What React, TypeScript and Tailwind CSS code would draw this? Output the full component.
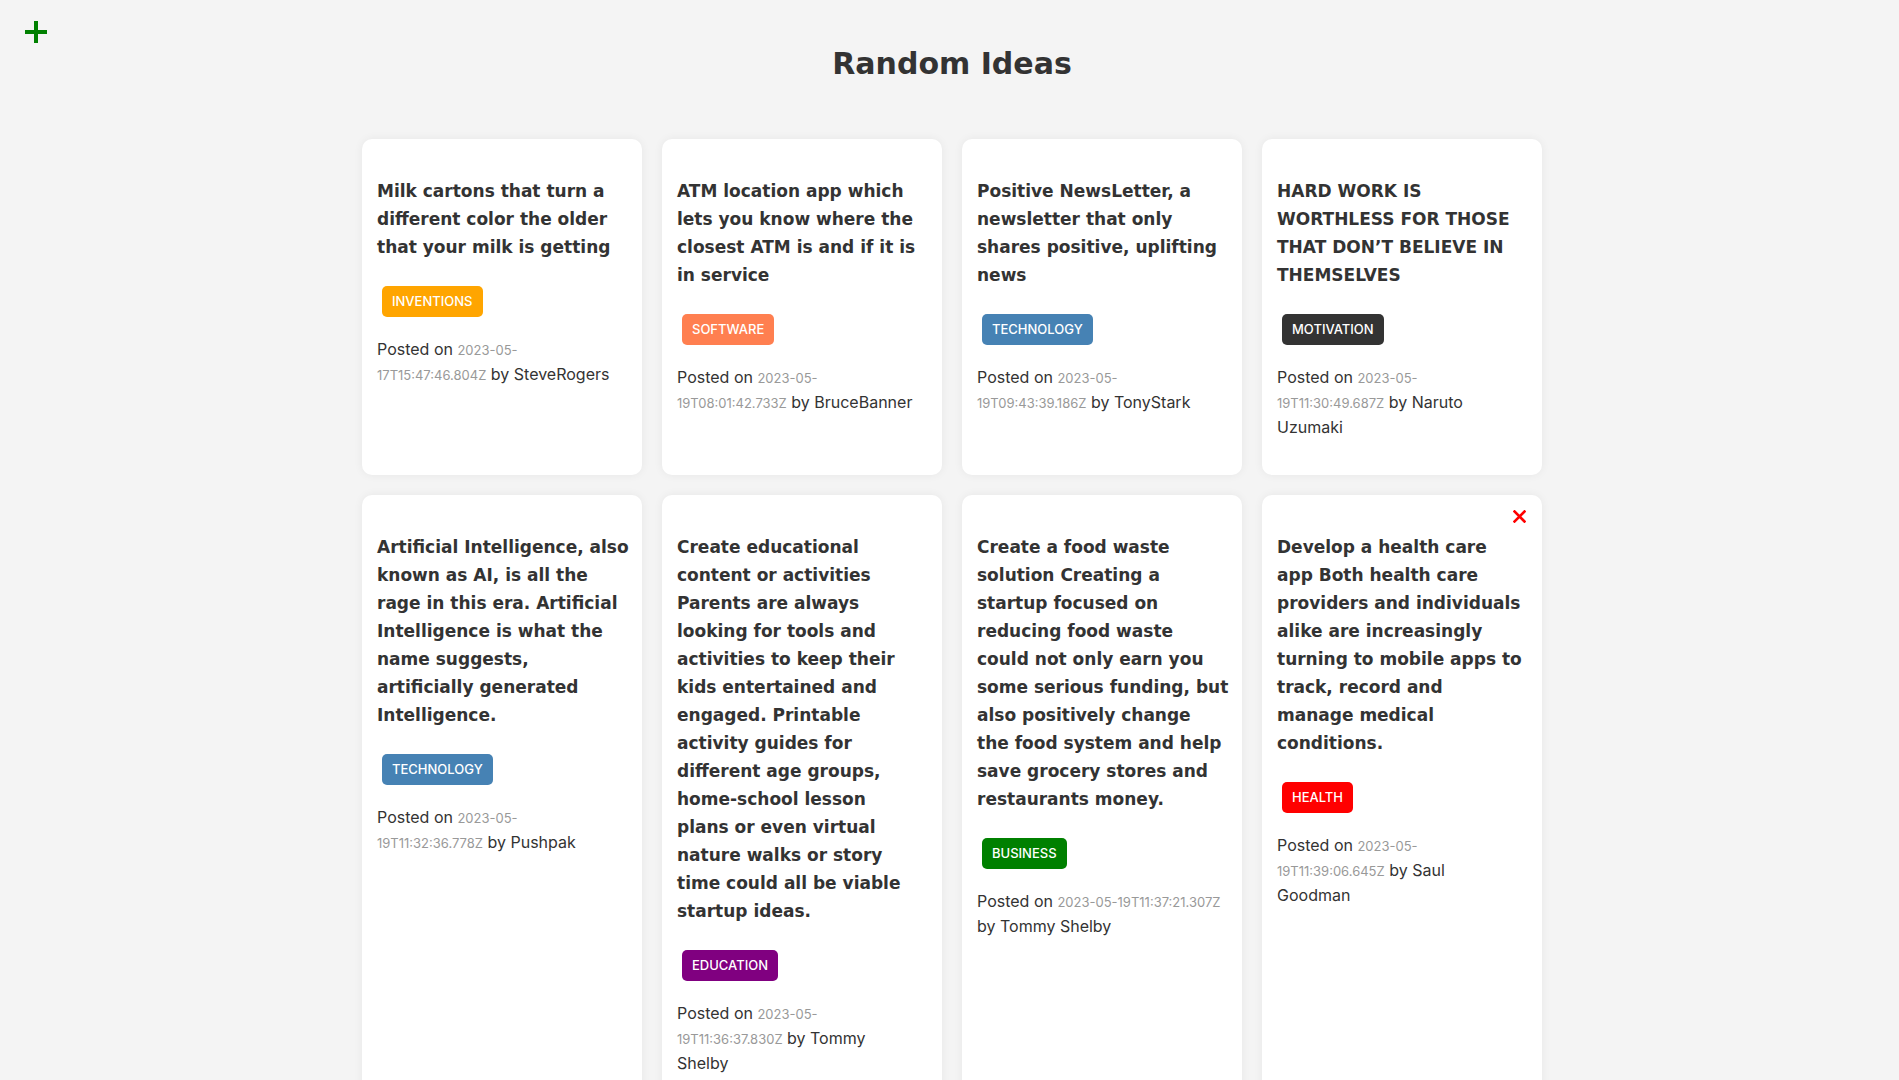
import React from "react";

type Seg = { t: string; d?: boolean };
type Idea = {
  lines: string[];
  tag: string;
  color: string;
  posted: Seg[][];
  del?: boolean;
};

const ideas: Idea[] = [
  {
    lines: ["Milk cartons that turn a", "different color the older", "that your milk is getting"],
    tag: "Inventions",
    color: "bg-[#ffa500]",
    posted: [
      [{ t: "Posted on " }, { t: "2023-05-", d: true }],
      [{ t: "17T15:47:46.804Z", d: true }, { t: " by SteveRogers" }],
    ],
  },
  {
    lines: ["ATM location app which", "lets you know where the", "closest ATM is and if it is", "in service"],
    tag: "Software",
    color: "bg-[#ff7f50]",
    posted: [
      [{ t: "Posted on " }, { t: "2023-05-", d: true }],
      [{ t: "19T08:01:42.733Z", d: true }, { t: " by BruceBanner" }],
    ],
  },
  {
    lines: ["Positive NewsLetter, a", "newsletter that only", "shares positive, uplifting", "news"],
    tag: "Technology",
    color: "bg-[#4682b4]",
    posted: [
      [{ t: "Posted on " }, { t: "2023-05-", d: true }],
      [{ t: "19T09:43:39.186Z", d: true }, { t: " by TonyStark" }],
    ],
  },
  {
    lines: ["HARD WORK IS", "WORTHLESS FOR THOSE", "THAT DON\u2019T BELIEVE IN", "THEMSELVES"],
    tag: "Motivation",
    color: "bg-[#333333]",
    posted: [
      [{ t: "Posted on " }, { t: "2023-05-", d: true }],
      [{ t: "19T11:30:49.687Z", d: true }, { t: " by Naruto" }],
      [{ t: "Uzumaki" }],
    ],
  },
  {
    lines: [
      "Artificial Intelligence, also",
      "known as AI, is all the",
      "rage in this era. Artificial",
      "Intelligence is what the",
      "name suggests,",
      "artificially generated",
      "Intelligence.",
    ],
    tag: "Technology",
    color: "bg-[#4682b4]",
    posted: [
      [{ t: "Posted on " }, { t: "2023-05-", d: true }],
      [{ t: "19T11:32:36.778Z", d: true }, { t: " by Pushpak" }],
    ],
  },
  {
    lines: [
      "Create educational",
      "content or activities",
      "Parents are always",
      "looking for tools and",
      "activities to keep their",
      "kids entertained and",
      "engaged. Printable",
      "activity guides for",
      "different age groups,",
      "home-school lesson",
      "plans or even virtual",
      "nature walks or story",
      "time could all be viable",
      "startup ideas.",
    ],
    tag: "Education",
    color: "bg-[#800080]",
    posted: [
      [{ t: "Posted on " }, { t: "2023-05-", d: true }],
      [{ t: "19T11:36:37.830Z", d: true }, { t: " by Tommy" }],
      [{ t: "Shelby" }],
    ],
  },
  {
    lines: [
      "Create a food waste",
      "solution Creating a",
      "startup focused on",
      "reducing food waste",
      "could not only earn you",
      "some serious funding, but",
      "also positively change",
      "the food system and help",
      "save grocery stores and",
      "restaurants money.",
    ],
    tag: "Business",
    color: "bg-[#008000]",
    posted: [
      [{ t: "Posted on " }, { t: "2023-05-19T11:37:21.307Z", d: true }],
      [{ t: "by Tommy Shelby" }],
    ],
  },
  {
    lines: [
      "Develop a health care",
      "app Both health care",
      "providers and individuals",
      "alike are increasingly",
      "turning to mobile apps to",
      "track, record and",
      "manage medical",
      "conditions.",
    ],
    tag: "Health",
    color: "bg-[#ff0000]",
    del: true,
    posted: [
      [{ t: "Posted on " }, { t: "2023-05-", d: true }],
      [{ t: "19T11:39:06.645Z", d: true }, { t: " by Saul" }],
      [{ t: "Goodman" }],
    ],
  },
];

function Card({ idea }: { idea: Idea }) {
  return (
    <div className="relative bg-white rounded-[10px] shadow-[0_0_10px_rgba(0,0,0,0.06)] px-[15px] pt-[38px] pb-[36px]">
      {idea.del && (
        <button className="absolute right-[16px] top-[15px] w-[13px] h-[13px]" aria-label="delete">
          <svg viewBox="0 0 13 13" width="13" height="13">
            <path d="M1.5 1.5 L11.5 11.5 M11.5 1.5 L1.5 11.5" stroke="#ff0000" strokeWidth="2.6" strokeLinecap="square" />
          </svg>
        </button>
      )}
      <h3 className="font-['DejaVu_Sans',sans-serif] font-bold text-[17px] leading-[28px] text-[#333333]">
        {idea.lines.map((l, i) => (
          <span key={i} className="block whitespace-nowrap">
            {l}
          </span>
        ))}
      </h3>
      <div className="mt-[25px] ml-[5px]">
        <span
          className={`inline-block ${idea.color} text-white uppercase font-['Inter',sans-serif] font-medium text-[13px] h-[31px] leading-[31px] px-[10px] rounded-[5px]`}
        >
          {idea.tag}
        </span>
      </div>
      <p className="mt-[20px] font-['Inter',sans-serif] text-[16px] leading-[24px] text-[#333333]">
        {idea.posted.map((line, i) => (
          <span key={i} className="block whitespace-nowrap">
            {line.map((s, j) =>
              s.d ? (
                <span key={j} className="text-[13px] text-[#999999]">
                  {s.t}
                </span>
              ) : (
                <span key={j}>{s.t}</span>
              )
            )}
          </span>
        ))}
      </p>
    </div>
  );
}

export default function App() {
  return (
    <div className="min-h-screen bg-[#f4f4f4] pl-[5px] relative">
      <button className="absolute left-[25px] top-[21px] w-[22px] h-[22px]" aria-label="add idea">
        <svg viewBox="0 0 22 22" width="22" height="22">
          <rect x="9" y="0" width="4" height="22" fill="#008000" />
          <rect x="0" y="9" width="22" height="4" fill="#008000" />
        </svg>
      </button>
      <h1 className="pt-[44px] text-center font-['DejaVu_Sans',sans-serif] font-bold text-[30px] leading-[40px] text-[#333333]">
        Random Ideas
      </h1>
      <div className="w-[1180px] mx-auto mt-[55px] grid grid-cols-4 gap-[20px] pb-[40px]">
        {ideas.map((idea, i) => (
          <Card key={i} idea={idea} />
        ))}
      </div>
    </div>
  );
}
